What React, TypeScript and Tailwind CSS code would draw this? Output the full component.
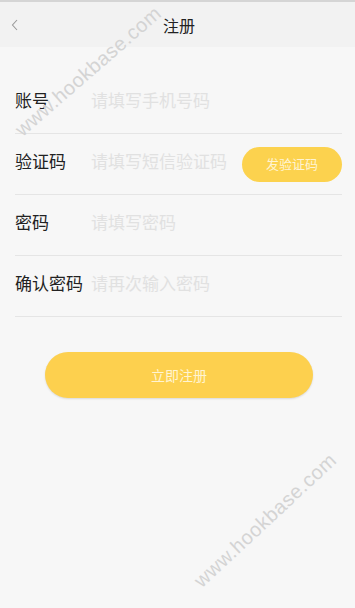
const rows = [
  { label: "账号", placeholder: "请填写手机号码" },
  { label: "验证码", placeholder: "请填写短信验证码", action: "发验证码" },
  { label: "密码", placeholder: "请填写密码" },
  { label: "确认密码", placeholder: "请再次输入密码" },
]

function Watermark({ className }: { className: string }) {
  return (
    <div
      className={`pointer-events-none absolute -translate-x-1/2 -translate-y-1/2 whitespace-nowrap text-[20px] tracking-[0.5px] text-[#d4d4d4] ${className}`}
      style={{ fontFamily: '"Liberation Sans", Arial, sans-serif' }}
    >
      www.hookbase.com
    </div>
  )
}

export default function App() {
  return (
    <div
      className="relative min-h-[608px] overflow-hidden bg-[#f7f7f7]"
      style={{ fontFamily: '"Noto Sans CJK SC", "Noto Sans", sans-serif' }}
    >
      <div className="grid h-[47px] grid-cols-[1fr_auto_1fr] items-center border-t-2 border-[#d5d5d5] bg-[#f2f2f2]">
        <div className="pl-[11px]">
          <svg width="8" height="12" viewBox="0 0 8 12" fill="none">
            <polyline points="6,1 1.5,6 6,11" stroke="#9a9a9a" strokeWidth="1.1" />
          </svg>
        </div>
        <h1 className="pl-[3px] text-[16px] text-[#222]">注册</h1>
        <div />
      </div>

      <div className="mt-[26px] ml-[15px] mr-[13px]">
        {rows.map((row) => (
          <div key={row.label} className="flex h-[61px] items-center border-b border-[#e5e5e5]">
            <div className="mb-[7px] flex items-center">
              <span className="w-[76px] text-[17px] text-[#222]">{row.label}</span>
              <span className="text-[17px] text-[#e1e1e1]">{row.placeholder}</span>
            </div>
            {row.action && (
              <button
                type="button"
                className="ml-auto h-[35px] w-[100px] rounded-full bg-[#fcd24e] text-[13px] text-[#fff4d2]"
              >
                {row.action}
              </button>
            )}
          </div>
        ))}
      </div>

      <button
        type="button"
        className="mt-[35px] ml-[45px] h-[46px] w-[268px] rounded-full bg-[#fdd04e] text-[14px] text-[#fff4d2] shadow-[0_1px_2px_rgba(0,0,0,0.12)]"
      >
        立即注册
      </button>

      <Watermark className="left-[88px] top-[71px] -rotate-[41deg]" />
      <Watermark className="left-[265px] top-[520px] -rotate-[43deg]" />
    </div>
  )
}
